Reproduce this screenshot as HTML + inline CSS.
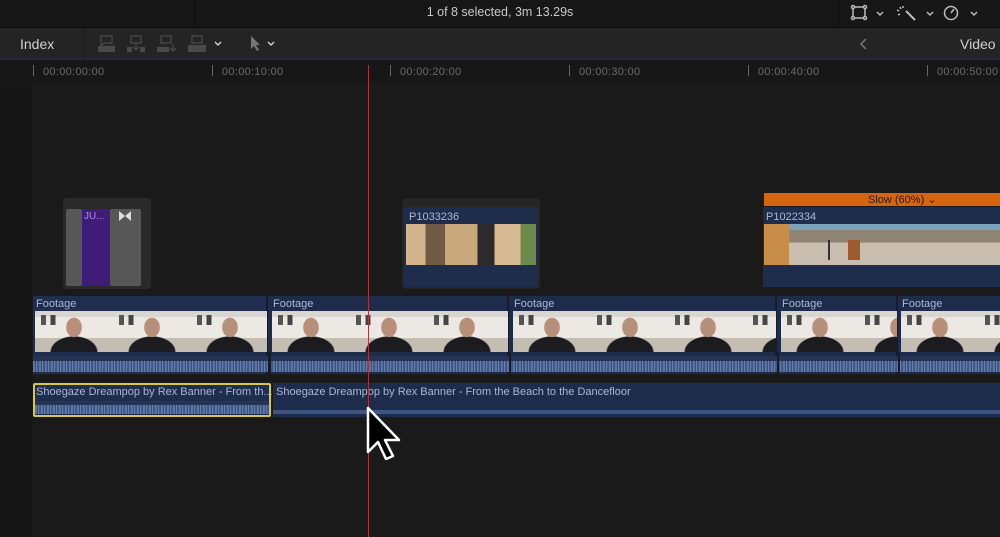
<!DOCTYPE html>
<html><head><style>
*{margin:0;padding:0;box-sizing:border-box}
body{width:1000px;height:537px;background:#1a1a1a;font-family:"Liberation Sans",sans-serif;position:relative;overflow:hidden}
.a{position:absolute}
.top{left:0;top:0;width:1000px;height:28px;background:#171717;border-bottom:1px solid #0c0c0c}
.tb{left:0;top:28px;width:1000px;height:32px;background:#242424;border-bottom:2px solid #2a2440}
.ruler{left:0;top:62px;width:1000px;height:20px;background:#171717}
.tc{top:66px;font-size:11px;color:#6a6a6a;letter-spacing:.3px}
.tick{top:65px;width:1px;height:11px;background:#666}
.thumb{background-color:#d9d6d2;
background-image:
radial-gradient(ellipse 8px 10px at 50% 40%,#b88f78 0 95%,transparent 100%),
radial-gradient(ellipse 24px 16px at 50% 100%,#1b1b20 0 95%,transparent 100%),
linear-gradient(90deg,transparent 0 8%,#555 8% 14%,transparent 14% 20%,#444 20% 26%,transparent 26%),
linear-gradient(#d9d6d2 0 6px,#ece9e4 6px 27px,#c4bdb1 27px);
background-size:78px 41px,78px 41px,78px 10px,78px 41px;background-position:0 0,0 0,0 4px,0 0;background-repeat:repeat-x}
.wave{background:#263454;background-image:linear-gradient(#263454 0 30%,transparent 30%),repeating-linear-gradient(90deg,#5a73a0 0 2px,#3a4f78 2px 3px,#6880ab 3px 4px,#42588a 4px 6px);}
.hd{font-size:11px;color:#aab6d4}
</style></head><body>
<div class="a top"></div>
<div class="a" style="left:194px;top:0;width:1px;height:28px;background:#0c0c0c"></div>
<div class="a" style="left:838px;top:0;width:1px;height:28px;background:#0c0c0c"></div>
<div class="a" style="left:0;top:5px;width:1000px;text-align:center;font-size:12.5px;color:#c8c8c8">1 of 8 selected, 3m 13.29s</div>
<svg class="a" style="left:850px;top:3px" width="140" height="20" viewBox="0 0 140 20" fill="none" stroke="#bbb" stroke-width="1.5">
<rect x="3" y="4" width="12" height="11"/><circle cx="3" cy="4" r="1.5" fill="#171717"/><circle cx="15" cy="4" r="1.5" fill="#171717"/><circle cx="3" cy="15" r="1.5" fill="#171717"/><circle cx="15" cy="15" r="1.5" fill="#171717"/>
<path d="M27 9l3 3 3-3"/>
<path d="M56 8l9 9" stroke-width="2"/><path d="M50 4l1 2M47 7l2 1M53 3v2M48 12l2-1"/>
<path d="M77 9l3 3 3-3"/>
<circle cx="101" cy="10" r="6.5"/><path d="M101 10l3-4"/>
<path d="M121 9l3 3 3-3"/>
</svg>
<div class="a tb"></div>
<div class="a" style="left:84px;top:28px;width:1px;height:32px;background:#1a1a1a"></div>
<div class="a" style="left:20px;top:36px;font-size:14px;color:#d0d0d0">Index</div>
<svg class="a" style="left:96px;top:33px" width="190" height="22" viewBox="0 0 190 22" fill="#4a4a4a" stroke="#4a4a4a">
<path d="M5 3h11v7H8l-3 3z" fill="none" stroke-width="1.3"/><rect x="2" y="13" width="17" height="6" stroke="none"/>
<rect x="35" y="3" width="10" height="7" fill="none" stroke-width="1.3"/><path d="M40 10v7M37 14l3 3 3-3" fill="none" stroke-width="1.3"/><rect x="31" y="14" width="5" height="5" stroke="none"/><rect x="44" y="14" width="5" height="5" stroke="none"/>
<rect x="65" y="3" width="10" height="7" fill="none" stroke-width="1.3"/><rect x="61" y="14" width="12" height="5" stroke="none"/><path d="M77 11v7M74 15l3 3 3-3" fill="none" stroke-width="1.3"/>
<rect x="96" y="3" width="10" height="7" fill="none" stroke-width="1.3"/><rect x="92" y="12" width="18" height="7" stroke="none"/>
<path d="M119 9l3 3 3-3" fill="none" stroke="#ccc" stroke-width="1.5"/>
<path d="M155 3v13l3-3 3 5 2-1-3-5h4z" fill="#777" stroke="none"/>
<path d="M172 9l3 3 3-3" fill="none" stroke="#ccc" stroke-width="1.5"/>
</svg>
<svg class="a" style="left:858px;top:37px" width="12" height="14" viewBox="0 0 12 14"><path d="M8 2L3 7l5 5" fill="none" stroke="#777" stroke-width="1.5"/></svg>
<div class="a" style="left:960px;top:36px;font-size:14px;color:#d0d0d0">Video</div>
<div class="a ruler"></div>
<div class="a" style="left:0;top:82px;width:32px;height:455px;background:#161616"></div>
<div class="a tick" style="left:33px"></div><div class="a tc" style="left:43px">00:00:00:00</div>
<div class="a tick" style="left:212px"></div><div class="a tc" style="left:222px">00:00:10:00</div>
<div class="a tick" style="left:390px"></div><div class="a tc" style="left:400px">00:00:20:00</div>
<div class="a tick" style="left:569px"></div><div class="a tc" style="left:579px">00:00:30:00</div>
<div class="a tick" style="left:748px"></div><div class="a tc" style="left:758px">00:00:40:00</div>
<div class="a tick" style="left:927px"></div><div class="a tc" style="left:937px">00:00:50:00</div>

<div class="a" style="left:63px;top:198px;width:88px;height:91px;background:#2a2a2a;border-radius:4px"></div>
<div class="a" style="left:66px;top:209px;width:16px;height:77px;background:#575757;border-radius:2px"></div>
<div class="a" style="left:82px;top:209px;width:28px;height:77px;background:#3e1c78"></div>
<div class="a" style="left:84px;top:211px;font-size:10px;color:#a98fe0">JU...</div>
<div class="a" style="left:110px;top:209px;width:31px;height:77px;background:#575757;border-radius:2px"></div>
<svg class="a" style="left:118px;top:210px" width="14" height="12"><path d="M1 1l6 5-6 5zM13 1l-6 5 6 5z" fill="#ddd"/></svg>

<div class="a" style="left:402px;top:198px;width:138px;height:91px;background:#262626;border-radius:4px"></div>
<div class="a" style="left:404px;top:207px;width:134px;height:80px;background:#1f2d4d"></div>
<div class="a hd" style="left:409px;top:211px">P1033236</div>
<div class="a" style="left:406px;top:224px;width:130px;height:41px;background:linear-gradient(90deg,#d4b48c 0 15%,#6f5a44 15% 30%,#c9a87d 30% 55%,#2b2b2b 55% 68%,#d6b990 68% 88%,#6c8a4c 88%)"></div>

<div class="a" style="left:764px;top:193px;width:236px;height:13px;background:#d5650f"></div>
<div class="a" style="left:868px;top:193px;font-size:11px;color:#2a1a08">Slow (60%) ⌄</div>
<div class="a" style="left:763px;top:207px;width:237px;height:80px;background:#1f2d4d"></div>
<div class="a hd" style="left:766px;top:211px">P1022334</div>
<div class="a" style="left:764px;top:224px;width:236px;height:41px;background:linear-gradient(#7ea3b8 0 15%,#8f8576 15% 45%,#c9bdaf 45%)"></div>
<div class="a" style="left:764px;top:224px;width:25px;height:41px;background:#c98d4a"></div>
<div class="a" style="left:820px;top:240px;width:40px;height:20px;background:linear-gradient(90deg,transparent 0 20%,#333 20% 25%,transparent 25% 70%,#a05a30 70%)"></div>

<div class="a" style="left:33px;top:296px;width:967px;height:78px;background:#1e2c4b"></div>
<div class="a" style="left:33px;top:296px;width:235px;height:78px;background:#1f2e4f;border-right:2px solid #151c2c"></div>
<div class="a" style="left:270px;top:296px;width:239px;height:78px;border-right:2px solid #151c2c"></div>
<div class="a" style="left:511px;top:296px;width:266px;height:78px;border-right:2px solid #151c2c"></div>
<div class="a" style="left:779px;top:296px;width:119px;height:78px;border-right:2px solid #151c2c"></div>
<div class="a hd" style="left:36px;top:298px">Footage</div>
<div class="a hd" style="left:273px;top:298px">Footage</div>
<div class="a hd" style="left:514px;top:298px">Footage</div>
<div class="a hd" style="left:782px;top:298px">Footage</div>
<div class="a hd" style="left:902px;top:298px">Footage</div>
<div class="a thumb" style="left:35px;top:311px;width:232px;height:41px"></div>
<div class="a thumb" style="left:272px;top:311px;width:236px;height:41px"></div>
<div class="a thumb" style="left:513px;top:311px;width:263px;height:41px"></div>
<div class="a thumb" style="left:781px;top:311px;width:116px;height:41px"></div>
<div class="a thumb" style="left:901px;top:311px;width:99px;height:41px"></div>
<div class="a wave" style="left:33px;top:356px;width:967px;height:16px"></div>
<div class="a" style="left:268px;top:352px;width:3px;height:22px;background:#151c2c"></div>
<div class="a" style="left:509px;top:352px;width:2px;height:22px;background:#151c2c"></div>
<div class="a" style="left:777px;top:352px;width:2px;height:22px;background:#151c2c"></div>
<div class="a" style="left:898px;top:352px;width:2px;height:22px;background:#151c2c"></div>

<div class="a" style="left:273px;top:383px;width:727px;height:34px;background:#1e2c4b"></div>
<div class="a" style="left:273px;top:410px;width:727px;height:4px;background:#3d5580"></div>
<div class="a hd" style="left:276px;top:386px">Shoegaze Dreampop by Rex Banner - From the Beach to the Dancefloor</div>
<div class="a" style="left:33px;top:383px;width:238px;height:34px;background:#1f2e4f;border:2px solid #d6c64a;border-radius:2px"></div>
<div class="a wave" style="left:35px;top:401px;width:234px;height:13px"></div>
<div class="a hd" style="left:36px;top:386px">Shoegaze Dreampop by Rex Banner - From th...</div>

<div class="a" style="left:368px;top:65px;width:1px;height:472px;background:#a8363a"></div>
<svg class="a" style="left:364px;top:406px" width="40" height="54" viewBox="0 0 40 54"><path d="M4 2v44l10-10 8 17 7-3-8-16h14z" fill="#000" stroke="#fff" stroke-width="2.5" stroke-linejoin="round"/></svg>
</body></html>
